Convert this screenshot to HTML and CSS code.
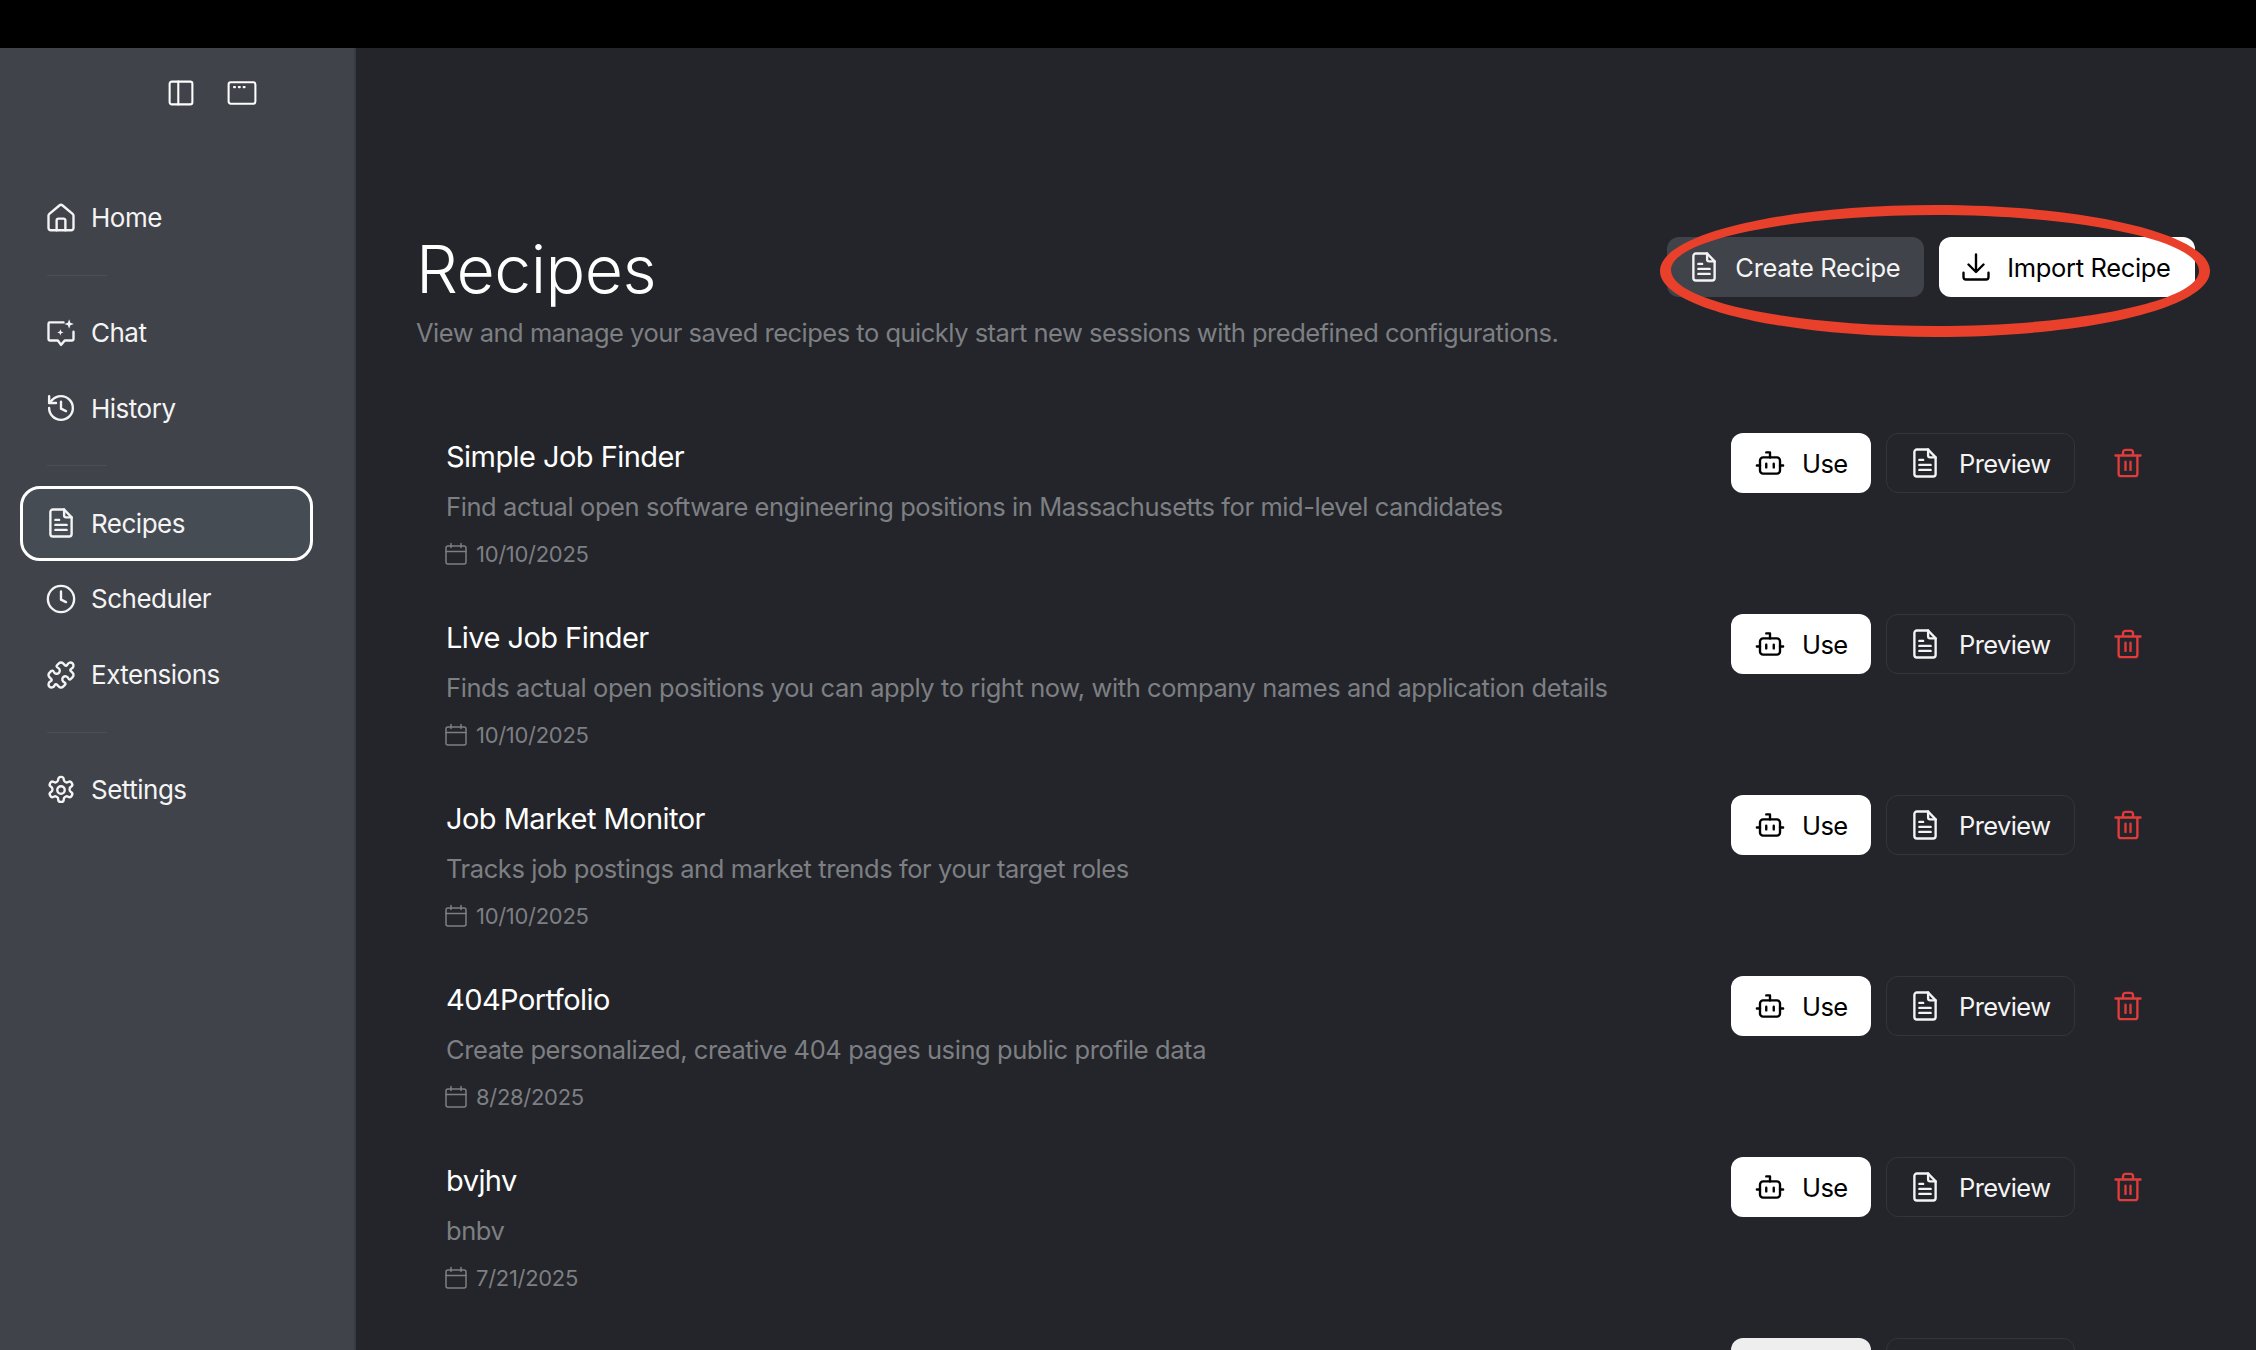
FILE: index.html
```html
<!DOCTYPE html>
<html lang="en">
<head>
  <meta charset="UTF-8">
  <title>Recipes</title>
  <link rel="stylesheet" href="styles.css">
</head>
<body>
  <svg class="sprites" width="0" height="0">
    <symbol id="i-home" viewBox="0 0 24 24"><path d="M2 10.200a2 2 0 0 1 .7-1.500l8-6.700a2 2 0 0 1 2.600 0l8 6.700a2 2 0 0 1 .7 1.500V20a1.800 1.800 0 0 1-1.800 1.800H3.800A1.800 1.800 0 0 1 2 20z"/><path d="M8.500 21.800V14a1.500 1.500 0 0 1 1.500-1.500h4a1.500 1.500 0 0 1 1.500 1.500v7.800"/></symbol>
    <symbol id="i-chat" viewBox="0 0 24 24"><path d="M14 3.500H3a1 1 0 0 0-1 1V17a1 1 0 0 0 1 1h6.500l2.500 3.500 3-3.500h6a1 1 0 0 0 1-1V11"/><path d="M18.500 1l1 2.800 2.800 1-2.800 1-1 2.800-1-2.800-2.800-1 2.800-1zM11.500 9l.7 1.800 1.800.7-1.800.7-.7 1.800-.7-1.800-1.800-.7 1.800-.7z" class="solid"/></symbol>
    <symbol id="i-history" viewBox="0 0 24 24"><path d="M2.500 12a9.500 9.500 0 1 0 9.500-9.500A10 10 0 0 0 5 5.500L2.500 8"/><path d="M2.500 2.500V8H8"/><path d="M12 7v5.500l4 2"/></symbol>
    <symbol id="i-doc" viewBox="0 0 24 24"><path d="M14.500 1.200H5.500a2 2 0 0 0-2 2v17.600a2 2 0 0 0 2 2h13a2 2 0 0 0 2-2V7.500z"/><path d="M14.500 1.200v4.800a1.500 1.500 0 0 0 1.500 1.500h4.500"/><path d="M7.500 9.500h3M7.500 13.500h9M7.500 17.500h9"/></symbol>
    <symbol id="i-clock" viewBox="0 0 24 24"><circle cx="12" cy="12" r="10.500"/><path d="M12 6v6.500l4 2"/></symbol>
    <symbol id="i-puzzle" viewBox="0 0 24 24"><path d="M19.439 7.850c-.049.322.059.648.289.878l1.568 1.568c.47.47.706 1.087.706 1.704s-.235 1.233-.706 1.704l-1.611 1.611a.98.98 0 0 1-.837.276c-.47-.07-.802-.48-.968-.925a2.501 2.501 0 1 0-3.214 3.214c.446.166.855.497.925.968a.979.979 0 0 1-.276.837l-1.610 1.610a2.404 2.404 0 0 1-1.705.707 2.402 2.402 0 0 1-1.704-.706l-1.568-1.568a1.026 1.026 0 0 0-.877-.29c-.493.074-.84.504-1.020.968a2.500 2.500 0 1 1-3.237-3.237c.464-.18.894-.527.967-1.020a1.026 1.026 0 0 0-.289-.877l-1.568-1.568A2.402 2.402 0 0 1 1.998 12c0-.617.236-1.234.706-1.704L4.230 8.770c.24-.24.581-.353.917-.303.515.077.877.528 1.073 1.010a2.500 2.500 0 1 0 3.259-3.259c-.482-.196-.933-.558-1.010-1.073-.05-.336.062-.676.303-.917l1.525-1.525A2.402 2.402 0 0 1 12 1.998c.617 0 1.234.236 1.704.706l1.568 1.568c.23.23.556.338.877.29.493-.074.84-.504 1.020-.968a2.500 2.500 0 1 1 3.237 3.237c-.464.18-.894.527-.967 1.020Z"/></symbol>
    <symbol id="i-gear" viewBox="0 0 24 24"><path d="M12.220 1.500h-.44a2 2 0 0 0-2 2v.18a2 2 0 0 1-1 1.730l-.43.25a2 2 0 0 1-2 0l-.15-.08a2 2 0 0 0-2.730.73l-.22.38a2 2 0 0 0 .73 2.730l.15.1a2 2 0 0 1 1 1.720v.51a2 2 0 0 1-1 1.740l-.15.09a2 2 0 0 0-.73 2.730l.22.38a2 2 0 0 0 2.730.73l.15-.08a2 2 0 0 1 2 0l.43.25a2 2 0 0 1 1 1.730v.18a2 2 0 0 0 2 2h.44a2 2 0 0 0 2-2v-.18a2 2 0 0 1 1-1.730l.43-.25a2 2 0 0 1 2 0l.15.08a2 2 0 0 0 2.730-.73l.22-.39a2 2 0 0 0-.73-2.730l-.15-.08a2 2 0 0 1-1-1.740v-.5a2 2 0 0 1 1-1.740l.15-.09a2 2 0 0 0 .73-2.730l-.22-.38a2 2 0 0 0-2.730-.73l-.15.08a2 2 0 0 1-2 0l-.43-.25a2 2 0 0 1-1-1.730V3.500a2 2 0 0 0-2-2z"/><circle cx="12" cy="12" r="3"/></symbol>
    <symbol id="i-panel" viewBox="0 0 24 24"><rect x="1.500" y="1.500" width="21" height="21" rx="2"/><path d="M9.500 1.500v21"/></symbol>
    <symbol id="i-window" viewBox="0 0 28 24"><rect x="1.500" y="2" width="25" height="20" rx="2"/><path d="M6.500 6.500h1M11 6.500h1M15.500 6.500h1"/></symbol>
    <symbol id="i-import" viewBox="0 0 24 24"><path d="M12 2v13.500M6 10l6 6 6-6"/><path d="M2 16.500V20a2 2 0 0 0 2 2h16a2 2 0 0 0 2-2v-3.500"/></symbol>
    <symbol id="i-bot" viewBox="0 0 24 24"><path d="M12 7.500V3.500H9"/><rect x="4" y="7.500" width="16" height="13" rx="2.500"/><path d="M1.500 14H4M20 14h2.500M9 12.500v3M15 12.500v3"/></symbol>
    <symbol id="i-trash" viewBox="0 0 24 24"><path d="M2 6h20M4.500 6v14.500a2 2 0 0 0 2 2h11a2 2 0 0 0 2-2V6M8 6V3.500a2 2 0 0 1 2-2h4a2 2 0 0 1 2 2V6M10 11v6.500M14 11v6.500"/></symbol>
    <symbol id="i-cal" viewBox="0 0 24 24"><rect x="2" y="4" width="20" height="18" rx="2"/><path d="M7 1.500v4M17 1.500v4M2 9.500h20"/></symbol>
  </svg>

  <div class="topbar"></div>

  <div class="app">
    <aside class="sidebar">
      <div class="window-tools">
        <svg class="icon tool-panel"><use href="#i-panel"/></svg>
        <svg class="icon tool-window"><use href="#i-window"/></svg>
      </div>

      <nav class="nav">
        <a class="nav-item"><svg class="icon"><use href="#i-home"/></svg>Home</a>
        <div class="nav-sep"></div>
        <a class="nav-item"><svg class="icon"><use href="#i-chat"/></svg>Chat</a>
        <a class="nav-item"><svg class="icon"><use href="#i-history"/></svg>History</a>
        <div class="nav-sep"></div>
        <a class="nav-item active"><svg class="icon"><use href="#i-doc"/></svg>Recipes</a>
        <a class="nav-item"><svg class="icon"><use href="#i-clock"/></svg>Scheduler</a>
        <a class="nav-item"><svg class="icon"><use href="#i-puzzle"/></svg>Extensions</a>
        <div class="nav-sep"></div>
        <a class="nav-item"><svg class="icon"><use href="#i-gear"/></svg>Settings</a>
      </nav>
    </aside>

    <main class="main">
      <header class="page-head">
        <div>
          <h1>Recipes</h1>
          <p class="subtitle">View and manage your saved recipes to quickly start new sessions with predefined configurations.</p>
        </div>
        <div class="head-actions">
          <button class="btn btn-head btn-muted"><svg class="icon"><use href="#i-doc"/></svg>Create Recipe</button>
          <button class="btn btn-head btn-light"><svg class="icon"><use href="#i-import"/></svg>Import Recipe</button>
          <!-- red marker drawn over the two buttons -->
          <svg class="marker" viewBox="0 0 550 132"><path fill-rule="evenodd" d="M275 0C427 0 550 29 550 66C550 103 427 132 275 132C123 132 0 103 0 66C0 29 123 0 275 0ZM275 10C135 10 11 34 11 65C11 97 135 121 275 121C415 121 539 97 539 66C539 34 415 10 275 10Z"/></svg>
        </div>
      </header>

      <section class="recipes">
        <div class="recipe">
          <div class="recipe-info">
            <h3>Simple Job Finder</h3>
            <p class="desc">Find actual open software engineering positions in Massachusetts for mid-level candidates</p>
            <p class="date"><svg class="icon"><use href="#i-cal"/></svg>10/10/2025</p>
          </div>
          <div class="recipe-actions">
            <button class="btn btn-light btn-use"><svg class="icon"><use href="#i-bot"/></svg>Use</button>
            <button class="btn btn-outline"><svg class="icon"><use href="#i-doc"/></svg>Preview</button>
            <svg class="icon trash"><use href="#i-trash"/></svg>
          </div>
        </div>

        <div class="recipe">
          <div class="recipe-info">
            <h3>Live Job Finder</h3>
            <p class="desc">Finds actual open positions you can apply to right now, with company names and application details</p>
            <p class="date"><svg class="icon"><use href="#i-cal"/></svg>10/10/2025</p>
          </div>
          <div class="recipe-actions">
            <button class="btn btn-light btn-use"><svg class="icon"><use href="#i-bot"/></svg>Use</button>
            <button class="btn btn-outline"><svg class="icon"><use href="#i-doc"/></svg>Preview</button>
            <svg class="icon trash"><use href="#i-trash"/></svg>
          </div>
        </div>

        <div class="recipe">
          <div class="recipe-info">
            <h3>Job Market Monitor</h3>
            <p class="desc">Tracks job postings and market trends for your target roles</p>
            <p class="date"><svg class="icon"><use href="#i-cal"/></svg>10/10/2025</p>
          </div>
          <div class="recipe-actions">
            <button class="btn btn-light btn-use"><svg class="icon"><use href="#i-bot"/></svg>Use</button>
            <button class="btn btn-outline"><svg class="icon"><use href="#i-doc"/></svg>Preview</button>
            <svg class="icon trash"><use href="#i-trash"/></svg>
          </div>
        </div>

        <div class="recipe">
          <div class="recipe-info">
            <h3>404Portfolio</h3>
            <p class="desc">Create personalized, creative 404 pages using public profile data</p>
            <p class="date"><svg class="icon"><use href="#i-cal"/></svg>8/28/2025</p>
          </div>
          <div class="recipe-actions">
            <button class="btn btn-light btn-use"><svg class="icon"><use href="#i-bot"/></svg>Use</button>
            <button class="btn btn-outline"><svg class="icon"><use href="#i-doc"/></svg>Preview</button>
            <svg class="icon trash"><use href="#i-trash"/></svg>
          </div>
        </div>

        <div class="recipe">
          <div class="recipe-info">
            <h3>bvjhv</h3>
            <p class="desc">bnbv</p>
            <p class="date"><svg class="icon"><use href="#i-cal"/></svg>7/21/2025</p>
          </div>
          <div class="recipe-actions">
            <button class="btn btn-light btn-use"><svg class="icon"><use href="#i-bot"/></svg>Use</button>
            <button class="btn btn-outline"><svg class="icon"><use href="#i-doc"/></svg>Preview</button>
            <svg class="icon trash"><use href="#i-trash"/></svg>
          </div>
        </div>

        <!-- next row: only the tops of its buttons are in view -->
        <div class="recipe recipe-cut">
          <div class="recipe-info"></div>
          <div class="recipe-actions">
            <button class="btn btn-light btn-use"></button>
            <button class="btn btn-outline"></button>
          </div>
        </div>
      </section>
    </main>
  </div>
</body>
</html>
```

FILE: styles.css
```css
* { box-sizing: border-box; }

html, body {
  margin: 0;
  height: 1350px;
  overflow: hidden;
}

body {
  background: #000;
  font-family: Inter, "Liberation Sans", sans-serif;
  color: #fff;
}

.sprites { position: absolute; }

.topbar {
  height: 48px;
  background: #000;
}

.app {
  display: flex;
  height: 1302px;
}

/* icons */
.icon {
  flex: none;
  width: 30px;
  height: 30px;
  fill: none;
  stroke: currentColor;
  stroke-width: 1.9;
  stroke-linecap: round;
  stroke-linejoin: round;
}
.solid { fill: currentColor; stroke: none; }

/* sidebar */
.sidebar {
  width: 356px;
  flex: none;
  background: #40434a;
  border-right: 2px solid #383b41;
  padding: 0 20px;
}

.window-tools {
  display: flex;
  align-items: center;
  height: 132px;
  padding: 0 0 42px 148px;
  gap: 33px;
}
.tool-panel { width: 26px; height: 26px; }
.tool-window { width: 30px; height: 26px; }

.nav-item {
  display: flex;
  align-items: center;
  gap: 15px;
  width: 293px;
  height: 75.600px;
  padding-left: 23px;
  border: 3px solid transparent;
  border-radius: 20px;
  font-size: 26px;
  letter-spacing: -0.5px;
  color: #f4f4f5;
}
.nav-item.active {
  background: #464c53;
  border-color: #fff;
}

.nav-sep {
  height: 39.400px;
  display: flex;
  align-items: center;
  padding-left: 27px;
}
.nav-sep::before {
  content: "";
  width: 60px;
  height: 1px;
  background: #4a4e55;
}

/* main */
.main {
  flex: 1;
  min-width: 0;
  overflow: hidden;
  background: #23252a;
  padding: 189px 0 0 60px;
}

.page-head {
  display: flex;
  justify-content: space-between;
  align-items: flex-start;
  height: 196px;
  padding-right: 61.500px;
}

h1 {
  margin: -6px 0 0;
  font-size: 66px;
  line-height: 76px;
  font-weight: 300;
  letter-spacing: -0.5px;
}

.subtitle {
  margin: 8px 0 0;
  font-size: 25.500px;
  line-height: 36px;
  color: #7d7f83;
  letter-spacing: -0.5px;
  white-space: nowrap;
}

.head-actions {
  position: relative;
  display: flex;
  gap: 15px;
}

.marker {
  position: absolute;
  left: -7px;
  top: -32px;
  width: 550px;
  height: 132px;
  fill: #e8402a;
}

.btn {
  display: flex;
  align-items: center;
  height: 60px;
  padding: 0 23px;
  gap: 20px;
  border: 1px solid transparent;
  border-radius: 12px;
  font-family: inherit;
  font-size: 25.500px;
  letter-spacing: -0.6px;
  white-space: nowrap;
}
.btn-head { padding: 0 23px 0 21px; gap: 16px; letter-spacing: -0.35px; }
.btn-light { background: #fff; color: #000; }
.btn-muted { background: #40434a; color: #f4f4f5; }
.btn-outline { background: transparent; border-color: #33353a; color: #f4f4f5; width: 189px; gap: 19px; }

/* recipe rows */
.recipe {
  display: flex;
  justify-content: space-between;
  height: 181px;
  padding: 0 113px 0 30px;
}
.recipe-cut { padding-right: 181px; }
.recipe-cut .btn-light { background: #eeeeef; }

.recipe-info { padding-top: 4px; }

.recipe-info h3 {
  margin: 0;
  font-size: 29px;
  line-height: 40px;
  font-weight: 400;
  letter-spacing: -0.55px;
}

.desc {
  margin: 12px 0 0;
  font-size: 25.500px;
  line-height: 36px;
  color: #7d7f83;
  letter-spacing: -0.42px;
}

.date {
  display: flex;
  align-items: center;
  gap: 8px;
  margin: 13px 0 0 -2px;
  font-size: 22px;
  line-height: 32px;
  color: #7d7f83;
  letter-spacing: -0.3px;
}
.date .icon { width: 24px; height: 24px; stroke-width: 1.5; }

.recipe-actions {
  display: flex;
  align-items: center;
  gap: 15px;
  height: 60px;
}

.btn-use { width: 140px; gap: 17px; }

.trash {
  margin-left: 23px;
  color: #e03c3c;
}
```
